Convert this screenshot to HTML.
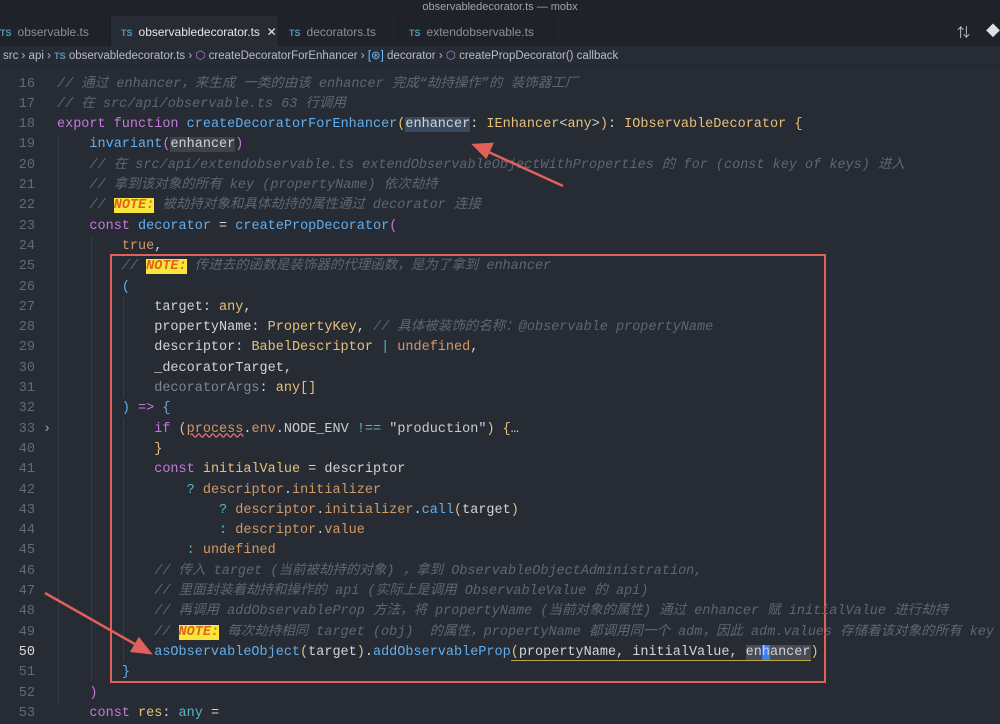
<!DOCTYPE html>
<html><head><meta charset="utf-8"><style>
*{margin:0;padding:0;box-sizing:border-box}
body{width:1000px;height:724px;overflow:hidden;background:#272b33;font-family:"Liberation Sans","Noto Sans CJK SC",sans-serif;position:relative;color:#abb2bf}
.title{position:absolute;left:0;top:0;width:1000px;height:16px;background:#1f2228;color:#9da5b4;font-size:11px;text-align:center;line-height:15px}
.tabs{position:absolute;top:16px;left:0;width:1000px;height:30px;background:#1f2228}
.tab{position:absolute;top:0;height:30px;line-height:32px;font-size:12px;color:#8a909c;border-right:1px solid #1a1d22}
.tab b{color:#519aba;font-size:9px;font-weight:bold;margin-right:6px}
.tab.act{background:#272b33;color:#e6e6e6}
.crumb{position:absolute;top:46px;left:0;width:1000px;height:20px;background:#272b33;font-size:11.5px;color:#b7bcc6;line-height:20px;padding-left:3px;border-bottom:1px solid #23262c}
.crumb b{color:#519aba;font-size:9px}
.ln{position:absolute;left:0;width:35px;text-align:right;font-family:"Liberation Mono",monospace;font-size:13.5px;color:#636a76;height:20.3px;line-height:20.3px;margin-top:1.5px}
.cl{position:absolute;left:57px;white-space:pre;font-family:"Liberation Mono","Noto Sans CJK SC",monospace;font-size:13.5px;height:20.3px;line-height:20.3px;color:#d0d4da;margin-top:1.5px}
.c{color:#5f6672;font-style:italic}
.k{color:#c678dd}.f{color:#61afef}.t{color:#e5c07b}.o{color:#d19a66}.p{color:#56b6c2}.s{color:#c8ccd3}
.n{background:#f7e73d;color:#e0641b;font-weight:bold;font-style:italic}
.hl{background:#3a4a5e}
.box{position:absolute;left:110px;top:254px;width:716px;height:429px;border:2.5px solid #e0605a}
.g{position:absolute;width:1px;background:#363b44}
</style></head><body>
<div class="title">observabledecorator.ts — mobx</div>
<div class="tabs">
<div class="tab" style="left:0;width:111px;padding-left:0"><b>TS</b>observable.ts</div>
<div class="tab act" style="left:111px;width:168px;padding-left:10px"><b>TS</b>observabledecorator.ts &nbsp;✕</div>
<div class="tab" style="left:279px;width:120px;padding-left:10px"><b>TS</b>decorators.ts</div>
<div class="tab" style="left:399px;width:155px;padding-left:10px"><b>TS</b>extendobservable.ts</div>
<div style="position:absolute;left:957px;top:6px;color:#c0c4cc;font-size:13px">⇅</div>
<div style="position:absolute;left:986px;top:5px;color:#e0e0e0;font-size:14px">◆</div>
</div>
<div class="crumb">src › api › <b>TS</b> observabledecorator.ts › <span style="color:#b180d7">⬡</span> createDecoratorForEnhancer › <span style="color:#75beff">[⊛]</span> decorator › <span style="color:#b180d7">⬡</span> createPropDecorator() callback</div>

<div class="g" style="left:58px;top:134px;height:570px"></div>
<div class="g" style="left:91px;top:236px;height:446px"></div>
<div class="g" style="left:123px;top:296px;height:102px"></div>
<div class="g" style="left:123px;top:418px;height:244px"></div>

<div class="box"></div>

<div class="ln" style="top:73px">16</div><div class="cl c" style="top:73px">// 通过 enhancer，来生成 一类的由该 enhancer 完成“劫持操作”的 装饰器工厂</div>
<div class="ln" style="top:93.3px">17</div><div class="cl c" style="top:93.3px">// 在 src/api/observable.ts 63 行调用</div>
<div class="ln" style="top:113.6px">18</div><div class="cl" style="top:113.6px"><span class="k">export function</span> <span class="f">createDecoratorForEnhancer</span><span class="t">(</span><span class="hl">enhancer</span>: <span class="t">IEnhancer</span>&lt;<span class="t">any</span>&gt;<span class="t">)</span>: <span class="t">IObservableDecorator</span> <span class="t">{</span></div>
<div class="ln" style="top:133.9px">19</div><div class="cl" style="top:133.9px">    <span class="f">invariant</span><span class="k">(</span><span style="background:#3e4249">enhancer</span><span class="k">)</span></div>
<div class="ln" style="top:154.2px">20</div><div class="cl c" style="top:154.2px">    // 在 src/api/extendobservable.ts extendObservableObjectWithProperties 的 for (const key of keys) 进入</div>
<div class="ln" style="top:174.5px">21</div><div class="cl c" style="top:174.5px">    // 拿到该对象的所有 key (propertyName) 依次劫持</div>
<div class="ln" style="top:194.8px">22</div><div class="cl c" style="top:194.8px">    // <span class="n">NOTE:</span> 被劫持对象和具体劫持的属性通过 decorator 连接</div>
<div class="ln" style="top:215.1px">23</div><div class="cl" style="top:215.1px">    <span class="k">const</span> <span class="f">decorator</span> = <span class="f">createPropDecorator</span><span class="k">(</span></div>
<div class="ln" style="top:235.4px">24</div><div class="cl" style="top:235.4px">        <span class="o">true</span>,</div>
<div class="ln" style="top:255.7px">25</div><div class="cl c" style="top:255.7px">        // <span class="n">NOTE:</span> 传进去的函数是装饰器的代理函数，是为了拿到 enhancer</div>
<div class="ln" style="top:276px">26</div><div class="cl" style="top:276px">        <span class="f">(</span></div>
<div class="ln" style="top:296.3px">27</div><div class="cl" style="top:296.3px">            target: <span class="t">any</span>,</div>
<div class="ln" style="top:316.6px">28</div><div class="cl" style="top:316.6px">            propertyName: <span class="t">PropertyKey</span>, <span class="c">// 具体被装饰的名称：@observable propertyName</span></div>
<div class="ln" style="top:336.9px">29</div><div class="cl" style="top:336.9px">            descriptor: <span class="t">BabelDescriptor</span> <span class="p">|</span> <span class="o">undefined</span>,</div>
<div class="ln" style="top:357.2px">30</div><div class="cl" style="top:357.2px">            _decoratorTarget,</div>
<div class="ln" style="top:377.5px">31</div><div class="cl" style="top:377.5px">            <span style="color:#7f8591">decoratorArgs</span>: <span class="t">any</span><span class="t">[]</span></div>
<div class="ln" style="top:397.8px">32</div><div class="cl" style="top:397.8px">        <span class="f">)</span> <span class="k">=&gt;</span> <span class="f">{</span></div>
<div class="ln" style="top:418.1px">33</div><div class="cl" style="top:418.1px;left:43px;color:#9da5b4">›</div><div class="cl" style="top:418.1px">            <span class="k">if</span> <span class="t">(</span><span class="o" style="text-decoration:underline wavy #e06c75">process</span>.<span class="o">env</span>.<span class="s">NODE_ENV</span> <span class="p">!==</span> <span class="s">"production"</span><span class="t">)</span> <span class="t">{</span>…</div>
<div class="ln" style="top:438.4px">40</div><div class="cl" style="top:438.4px">            <span class="t">}</span></div>
<div class="ln" style="top:458.7px">41</div><div class="cl" style="top:458.7px">            <span class="k">const</span> <span class="t">initialValue</span> = descriptor</div>
<div class="ln" style="top:479px">42</div><div class="cl" style="top:479px">                <span class="p">?</span> <span class="o">descriptor</span>.<span class="o">initializer</span></div>
<div class="ln" style="top:499.3px">43</div><div class="cl" style="top:499.3px">                    <span class="p">?</span> <span class="o">descriptor</span>.<span class="o">initializer</span>.<span class="f">call</span><span class="t">(</span>target<span class="t">)</span></div>
<div class="ln" style="top:519.6px">44</div><div class="cl" style="top:519.6px">                    <span class="p">:</span> <span class="o">descriptor</span>.<span class="o">value</span></div>
<div class="ln" style="top:539.9px">45</div><div class="cl" style="top:539.9px">                <span class="p">:</span> <span class="o">undefined</span></div>
<div class="ln" style="top:560.2px">46</div><div class="cl c" style="top:560.2px">            // 传入 target (当前被劫持的对象) ，拿到 ObservableObjectAdministration,</div>
<div class="ln" style="top:580.5px">47</div><div class="cl c" style="top:580.5px">            // 里面封装着劫持和操作的 api (实际上是调用 ObservableValue 的 api)</div>
<div class="ln" style="top:600.8px">48</div><div class="cl c" style="top:600.8px">            // 再调用 addObservableProp 方法，将 propertyName (当前对象的属性) 通过 enhancer 赋 initialValue 进行劫持</div>
<div class="ln" style="top:621.1px">49</div><div class="cl c" style="top:621.1px">            // <span class="n">NOTE:</span> 每次劫持相同 target (obj)  的属性，propertyName 都调用同一个 adm，因此 adm.values 存储着该对象的所有 key</div>
<div class="ln" style="top:641.4px;color:#d7dae0">50</div><div class="cl" style="top:641.4px">            <span class="f">asObservableObject</span><span class="t">(</span>target<span class="t">)</span>.<span class="f">addObservableProp</span><span class="t" style="border-bottom:1px solid #b8a640">(</span><span style="border-bottom:1px solid #b8a640">propertyName, initialValue, <span style="background:#474b52">en<span style="background:#3b7df0">h</span>ancer</span></span><span class="t">)</span></div>
<div class="ln" style="top:661.7px">51</div><div class="cl" style="top:661.7px">        <span class="f">}</span></div>
<div class="ln" style="top:682px">52</div><div class="cl" style="top:682px">    <span class="k">)</span></div>
<div class="ln" style="top:702.3px">53</div><div class="cl" style="top:702.3px">    <span class="k">const</span> <span class="t">res</span>: <span class="p">any</span> =</div>

<svg style="position:absolute;left:0;top:0" width="1000" height="724">
<g stroke="#e0605a" stroke-width="2.5" fill="#e0605a">
<line x1="563" y1="186" x2="482" y2="149"/>
<polygon points="474,145 492,144 486,157"/>
<line x1="45" y1="593" x2="140" y2="647"/>
<polygon points="150,653 132,651 139,639"/>
</g></svg>
</body></html>
